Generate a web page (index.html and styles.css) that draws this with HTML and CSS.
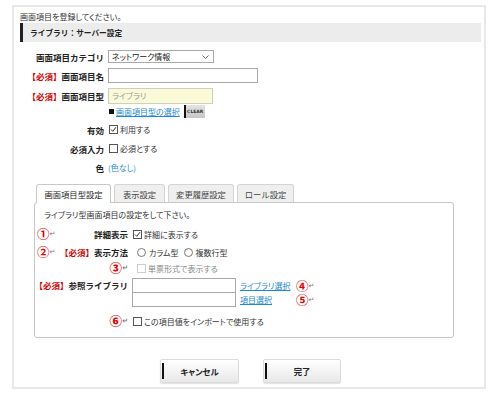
FILE: index.html
```html
<!DOCTYPE html>
<html lang="ja">
<head>
  <meta charset="UTF-8">
  <title>画面項目登録</title>
  <link rel="stylesheet" href="styles.css">
</head>
<body>
  <div class="frame">
    <p class="intro">画面項目を登録してください。</p>
    <h2 class="bar">ライブラリ：サーバー設定</h2>

    <div class="form">
      <div class="row">
        <span class="lbl">画面項目カテゴリ</span>
        <span class="select">ネットワーク情報
          <svg class="chev" width="7" height="4" viewBox="0 0 7 4"><polyline points="0.5,0.5 3.5,3.5 6.5,0.5" fill="none" stroke="#666"/></svg>
        </span>
      </div>
      <div class="row">
        <span class="lbl"><em class="req">【必須】</em>画面項目名</span>
        <span class="text name"></span>
      </div>
      <div class="row row-type">
        <span class="lbl"><em class="req">【必須】</em>画面項目型</span>
        <span class="text type">ライブラリ</span>
      </div>
      <div class="row row-link">
        <span class="lbl"></span>
        <span class="sq"></span><a href="#" class="link">画面項目型の選択</a><span class="clear">CLEAR</span>
      </div>
      <div class="row row-gap">
        <span class="lbl">有効</span>
        <svg class="cb" width="9" height="9" viewBox="0 0 9 9"><rect x="0.5" y="0.5" width="8" height="8" fill="#fff" stroke="#555"/><polyline points="2,4.5 3.8,6.3 7,2.2" fill="none" stroke="#333"/></svg>利用する
      </div>
      <div class="row">
        <span class="lbl">必須入力</span>
        <svg class="cb" width="9" height="9" viewBox="0 0 9 9"><rect x="0.5" y="0.5" width="8" height="8" fill="#fff" stroke="#555"/></svg>必須とする
      </div>
      <div class="row">
        <span class="lbl">色</span>
        <span class="color">(色なし)</span>
      </div>
    </div>

    <div class="tabs">
      <span class="tab on t1">画面項目型設定</span>
      <span class="tab t2">表示設定</span>
      <span class="tab t3">変更履歴設定</span>
      <span class="tab t4">ロール設定</span>
    </div>

    <div class="panel">
      <p class="pintro">ライブラリ型画面項目の設定をして下さい。</p>

      <div class="prow">
        <span class="mark"><b class="num">①</b><i class="ret">↵</i></span>
        <span class="plbl">詳細表示</span>
        <svg class="cb" width="9" height="9" viewBox="0 0 9 9"><rect x="0.5" y="0.5" width="8" height="8" fill="#fff" stroke="#555"/><polyline points="2,4.5 3.8,6.3 7,2.2" fill="none" stroke="#333"/></svg>詳細に表示する
      </div>

      <div class="prow">
        <span class="mark"><b class="num">②</b><i class="ret">↵</i></span>
        <span class="plbl"><em class="req">【必須】</em>表示方法</span>
        <span class="rd"></span>カラム型
        <span class="rd"></span>複数行型
      </div>

      <div class="prow prow-sm">
        <span class="mark"></span>
        <span class="plbl"><b class="num">③</b><i class="ret">↵</i></span>
        <svg class="cb off" width="9" height="9" viewBox="0 0 9 9"><rect x="0.5" y="0.5" width="8" height="8" fill="#fff" stroke="#ccc"/></svg><span class="muted">単票形式で表示する</span>
      </div>

      <div class="prow lib">
        <span class="plbl wide"><em class="req">【必須】</em>参照ライブラリ</span>
        <div class="libcol">
          <div class="lline">
            <span class="text libin"></span>
            <a href="#" class="link liblink">ライブラリ選択</a>
            <b class="num">④</b><i class="ret">↵</i>
          </div>
          <div class="lline">
            <span class="text libin"></span>
            <a href="#" class="link liblink">項目選択</a>
            <b class="num">⑤</b><i class="ret">↵</i>
          </div>
        </div>
      </div>

      <div class="prow prow-last">
        <span class="mark"></span>
        <span class="plbl"><b class="num">⑥</b><i class="ret">↵</i></span>
        <svg class="cb" width="9" height="9" viewBox="0 0 9 9"><rect x="0.5" y="0.5" width="8" height="8" fill="#fff" stroke="#555"/></svg>この項目値をインポートで使用する
      </div>
    </div>

    <div class="actions">
      <span class="btn cancel">キャンセル</span>
      <span class="btn done">完了</span>
    </div>
  </div>
</body>
</html>
```

FILE: styles.css
```css
body {
  margin: 0;
  font-family: "Noto Sans CJK JP", sans-serif;
  font-size: 8px;
  font-feature-settings: "palt";
  color: #333;
  background: #fff;
}
.frame {
  box-sizing: border-box;
  width: 474px;
  height: 384px;
  margin: 5px 0 0 12px;
  border: 2px solid #e8e8e8;
  padding: 0 3px 0 6px;
}
.intro {
  margin: 5px 0 0;
  height: 10px;
  line-height: 10px;
}
.bar {
  margin: 1px 0 0;
  height: 19px;
  line-height: 19px;
  padding-left: 7px;
  border-left: 3px solid #222;
  background: #ececec;
  font-size: 7.7px;
  font-feature-settings: normal;
  font-weight: bold;
  color: #222;
}
em {
  font-style: normal;
}
.req {
  color: #d40000;
}

/* form rows */
.form {
  margin-top: 5px;
}
.row {
  display: flex;
  align-items: center;
  height: 19px;
  white-space: nowrap;
}
.row-type {
  height: 17px;
  margin-top: 2px;
}
.row-link {
  height: 14px;
}
.row-gap {
  margin-top: 2px;
}
.lbl {
  flex: none;
  width: 84px;
  margin-right: 4px;
  text-align: right;
  font-size: 8.5px;
  font-feature-settings: normal;
  font-weight: bold;
  color: #222;
}
.select {
  box-sizing: border-box;
  width: 106px;
  height: 13px;
  border: 1px solid #a9a9a9;
  padding: 0 4px 0 3px;
  display: flex;
  align-items: center;
  justify-content: space-between;
  color: #222;
}
.text {
  box-sizing: border-box;
  display: block;
  height: 15px;
  border: 1px solid #a9a9a9;
  background: #fff;
}
.name {
  width: 150px;
}
.type {
  width: 105px;
  height: 16px;
  line-height: 14px;
  padding-left: 3px;
  background: #fafad8;
  border-color: #cfcfbf;
  color: #999;
}
.sq {
  width: 5px;
  height: 5px;
  margin: 0 2px 0 1px;
  background: #111;
}
.link {
  color: #1d88d4;
  text-decoration: underline;
}
.clear {
  box-sizing: border-box;
  width: 21px;
  height: 13px;
  margin-left: 4px;
  border-left: 2px solid #111;
  background: linear-gradient(#e4e4e4, #c6c6c6);
  font-family: "DejaVu Sans", sans-serif;
  font-size: 4.5px;
  font-weight: bold;
  line-height: 13px;
  text-align: center;
  color: #333;
}
.cb {
  flex: none;
  margin: 0 2px 0 1px;
}
.color {
  color: #2a8ed8;
}

/* tabs */
.tabs {
  display: flex;
  gap: 3px;
  margin: 7px 0 0 16px;
  height: 18px;
  align-items: flex-end;
}
.tab {
  box-sizing: border-box;
  height: 18px;
  border: 1px solid #d4d4d4;
  border-bottom: none;
  border-radius: 3px 3px 0 0;
  background: #efefef;
  display: flex;
  align-items: center;
  justify-content: center;
  font-size: 8.3px;
  font-feature-settings: normal;
  color: #444;
}
.tab.on {
  position: relative;
  z-index: 1;
  height: 19px;
  margin-bottom: -1px;
  padding-bottom: 1px;
  background: #fff;
  border-color: #c8c8c8;
  color: #222;
}
.t1 { width: 75px; }
.t2 { width: 51px; }
.t3 { width: 66px; }
.t4 { width: 57px; }

/* panel */
.panel {
  box-sizing: border-box;
  width: 420px;
  height: 136px;
  margin-left: 14px;
  border: 1px solid #c8c8c8;
  border-radius: 3px;
}
.pintro {
  margin: 7px 0 0 9px;
  height: 10px;
  line-height: 10px;
}
.prow {
  display: flex;
  align-items: center;
  height: 18px;
  padding-left: 2px;
  white-space: nowrap;
}
.pintro + .prow {
  margin-top: 5px;
}
.prow-sm {
  height: 14px;
}
.prow-last {
  margin-top: 4px;
}
.mark {
  flex: none;
  width: 24px;
  display: flex;
  align-items: center;
}
.plbl {
  flex: none;
  width: 67px;
  margin-right: 4px;
  display: flex;
  align-items: center;
  justify-content: flex-end;
  font-size: 8.5px;
  font-feature-settings: normal;
  font-weight: bold;
  color: #222;
}
.plbl.wide {
  width: 95px;
  margin-left: -4px;
  padding-top: 1px;
  height: 12px;
}
.num {
  font-size: 12.5px;
  line-height: 12px;
  color: #e60000;
}
.ret {
  font-family: "DejaVu Sans", sans-serif;
  font-style: normal;
  font-size: 7px;
  line-height: 10px;
  color: #777;
}
.rd {
  box-sizing: border-box;
  width: 9px;
  height: 9px;
  margin: 0 3px 0 5px;
  border: 1px solid #777;
  border-radius: 50%;
}
.cb.off {
  margin-left: 5px;
}
.muted {
  color: #888;
}
.prow.lib {
  align-items: flex-start;
  height: 30px;
  margin-top: 3px;
}
.lline {
  display: flex;
  align-items: center;
  height: 15px;
}
.lline + .lline {
  margin-top: -1px;
}
.libin {
  width: 104px;
}
.liblink {
  width: 56px;
  margin-left: 4px;
}

/* buttons */
.actions {
  display: flex;
  justify-content: center;
  gap: 24px;
  margin-top: 21px;
}
.btn {
  position: relative;
  box-sizing: border-box;
  height: 24px;
  border: 1px solid #dcdcdc;
  border-radius: 2px;
  background: linear-gradient(#fff, #e8e8e8);
  box-shadow: 0 1px 1px rgba(0, 0, 0, 0.12);
  display: flex;
  align-items: center;
  justify-content: center;
  font-size: 8.3px;
  font-weight: bold;
  color: #222;
}
.btn::before {
  content: "";
  position: absolute;
  left: 1px;
  top: 3px;
  bottom: 3px;
  width: 2px;
  background: #111;
}
.cancel { width: 79px; }
.done { width: 78px; }
```
